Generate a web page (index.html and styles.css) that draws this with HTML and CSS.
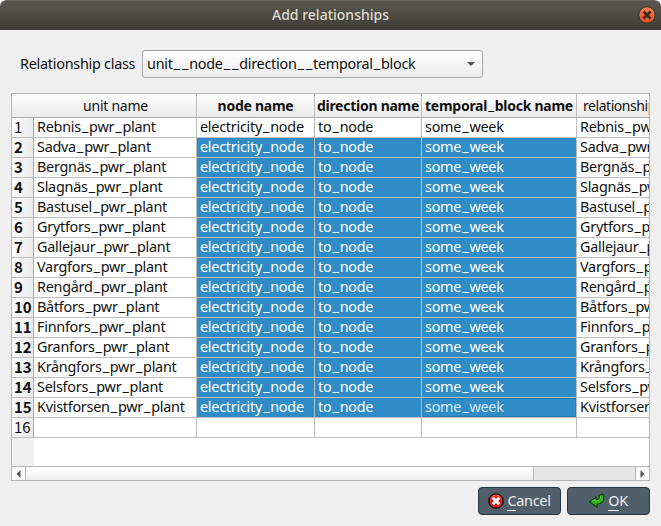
FILE: index.html
```html
<!DOCTYPE html>
<html lang="en">
<head>
<meta charset="utf-8">
<title>Add relationships</title>
<link rel="stylesheet" href="styles.css">
</head>
<body>
<div class="window">
<header class="titlebar"><span class="title">Add relationships</span>
<svg class="close" width="18" height="18" viewBox="0 0 18 18"><defs><linearGradient id="c" x2="0" y2="1"><stop stop-color="#f68058"/><stop offset="1" stop-color="#df4d20"/></linearGradient></defs><circle cx="9" cy="9" r="8.200" fill="url(#c)" stroke="#33312c"/><path d="M5.500 5.500l7 7M12.500 5.500l-7 7" stroke="#3a2a1c" stroke-width="2.500"/></svg></header>
<div class="classrow"><label>Relationship class</label><div class="combo"><span>unit<s>_</s><s>_</s>node<s>_</s><s>_</s>direction<s>_</s><s>_</s>temporal<s>_</s>block</span><i class="caret"></i></div></div>
<div class="view">
<div class="grid" id="grid">
<div class="h corner"></div><div class="h unit">unit name</div><div class="h b">node name</div><div class="h b">direction name</div><div class="h b"><span>temporal<s>_</s>block name</span></div><div class="h rel last">relationship name</div>
</div>
<div class="rest"><div class="restside"></div></div>
<div class="scroll"><div class="arrow"><svg width="5" height="8" viewBox="0 0 5 8"><path d="M4.500 0v8L.5 4z" fill="#555"/></svg></div><div class="thumb"></div><div class="track"></div><div class="arrow right"><svg width="5" height="8" viewBox="0 0 5 8"><path d="M.5 0v8L4.500 4z" fill="#555"/></svg></div></div>
</div>
<div class="buttons">
<button class="cancel"><svg width="16" height="16" viewBox="0 0 16 16"><circle cx="8" cy="8" r="7.200" fill="#e01b12" stroke="#1d0a08" stroke-width="1.300"/><path d="M2.600 5.600a6 6 0 0 1 10.800 0" stroke="#f2695c" fill="none"/><path d="M4.800 4.800l6.400 6.400M11.200 4.800l-6.400 6.400" stroke="#fff" stroke-width="3"/></svg><span><u>C</u>ancel</span></button>
<button class="ok"><svg width="16" height="16" viewBox="0 0 16 16"><path d="M10 2.300l3.800-1.100c2.300 4.600.9 9.400-5.600 9.800v3.200L.8 9l6.200-4.900v2.800c2.700-.2 4-1.400 3-4.600z" fill="#2cb31c" stroke="#0b4a08" stroke-width="1.200" stroke-linejoin="round"/><path d="M2.500 8.900l3.700-2.800v2c3.500.1 5.800-1.500 5.300-5" fill="none" stroke="#62dc42" stroke-width=".8"/></svg><span><u>O</u>K</span></button>
</div>
</div>
<script src="grid.js"></script>
</body>
</html>
```
FILE: styles.css
```css
*{box-sizing:border-box}
body{margin:0;background:#fff;font:14.4px/18px "Noto Sans",sans-serif;letter-spacing:-.26px;color:#111}
.window{width:661px;height:526px;background:#efefef;border-radius:6px 6px 0 0;overflow:hidden}
.titlebar{height:30px;background:linear-gradient(#5a574e,#3d3c37);border-top:1px solid #68655c;border-radius:6px 6px 0 0;display:flex;align-items:center;justify-content:center;position:relative}
.title{color:#dfdbd2;font-weight:500;font-size:14px;letter-spacing:0;margin-top:-2px}
.close{position:absolute;right:5px;top:5px}
.classrow{display:flex;align-items:center;height:28px;margin:20px 0 15px 20px}
.classrow label{width:122px;white-space:nowrap}
.combo{width:341px;height:28px;border:1px solid #a5a5a5;border-radius:3px;background:linear-gradient(#fefefe,#ececec);display:flex;align-items:center;justify-content:space-between;padding:0 7px 0 4px;white-space:nowrap}
.caret{border:4px solid transparent;border-top-color:#555;border-bottom:0}
/* underscores sit a little higher and apart from each other */
s{text-decoration:none;display:inline-block;transform:translateY(-1px);padding:0 1px 0 1.100px}
.view{margin-left:11px;width:639px;height:388px;border:1px solid #b4b4b4;background:#fff;overflow:hidden;display:flex;flex-direction:column}
.grid{display:grid;grid-template-columns:22px 163px 118px 107px 155px 72px;grid-template-rows:24px;grid-auto-rows:20px;flex:none}
.grid>div{border-right:1px solid #bdbdbd;border-bottom:1px solid #bdbdbd;white-space:nowrap;min-width:0;line-height:18px;padding-left:3px}
.grid>.last{border-right:0}
.grid>.h{background:linear-gradient(#fdfdfd,#ebebeb);display:flex;align-items:center;justify-content:center;padding:0;border-bottom-color:#aaa}
.grid>.corner{border-right:0}
.grid>.unit{font-size:14px;padding-left:1px}
.grid>.rel{justify-content:flex-start;padding-left:6px;font-size:14px;letter-spacing:-.45px}
.b{font-weight:700}
.grid>.h.b{font-size:14px}
.grid>.n{background:linear-gradient(90deg,#fdfdfd,#ebebeb);font-family:"Noto Sans CJK SC",sans-serif;font-size:15px;letter-spacing:0;padding:0 0 0 2px;border-right-color:#aaa}
.grid>.sel{background:#308cc6;color:#fff}
.grid>.cur{box-shadow:inset 0 0 0 1px #2779ae;color:#d8e9f4}
.rest{flex:1;display:flex}
.restside{width:22px;background:#efefef}
.scroll{height:15px;margin-bottom:-1px;border-top:1px solid #b4b4b4;display:flex;flex:none}
.arrow{width:14px;border-right:1px solid #b4b4b4;display:flex;align-items:center;justify-content:center;background:#fbfbfb;padding-bottom:1px}
.thumb{width:508px;background:linear-gradient(#fff,#ededed);border-right:1px solid #b4b4b4}
.track{flex:1;background:#e6e6e6}
.arrow.right{width:14px;border-right:0;border-left:1px solid #b4b4b4}
.buttons{display:flex;justify-content:flex-end;gap:6px;margin:6px 11px 0 0}
button{width:83px;height:28px;border:1px solid #2b363e;border-radius:4px;background:#515f6a;color:#eee;font:14.4px/17px "Noto Sans",sans-serif;letter-spacing:-.26px;display:flex;align-items:center;justify-content:center;gap:4px;padding:0}
button span{margin:-2px 0 0 -1px}
u{text-decoration:none;box-shadow:0 1px #eee}
```
FILE: grid.js
```js
const plants = ["Rebnis", "Sadva", "Bergnäs", "Slagnäs", "Bastusel", "Grytfors", "Gallejaur", "Vargfors", "Rengård", "Båtfors", "Finnfors", "Granfors", "Krångfors", "Selsfors", "Kvistforsen", ""];
const grid = document.getElementById("grid");
function cell(text, cls) {
  const d = document.createElement("div");
  d.className = cls;
  d.innerHTML = String(text).replace(/_/g, "<s>_</s>");
  grid.appendChild(d);
}
plants.forEach((p, i) => {
  const selected = i > 0 && p;
  const sel = selected ? "sel" : "";
  cell(i + 1, "n" + (selected ? " b" : ""));
  cell(p && p + "_pwr_plant", "");
  cell(p && "electricity_node", sel);
  cell(p && "to_node", sel);
  cell(p && "some_week", sel + (i === 14 ? " cur" : ""));
  cell(p && p + "_pwr_plant", "last");
});
```
